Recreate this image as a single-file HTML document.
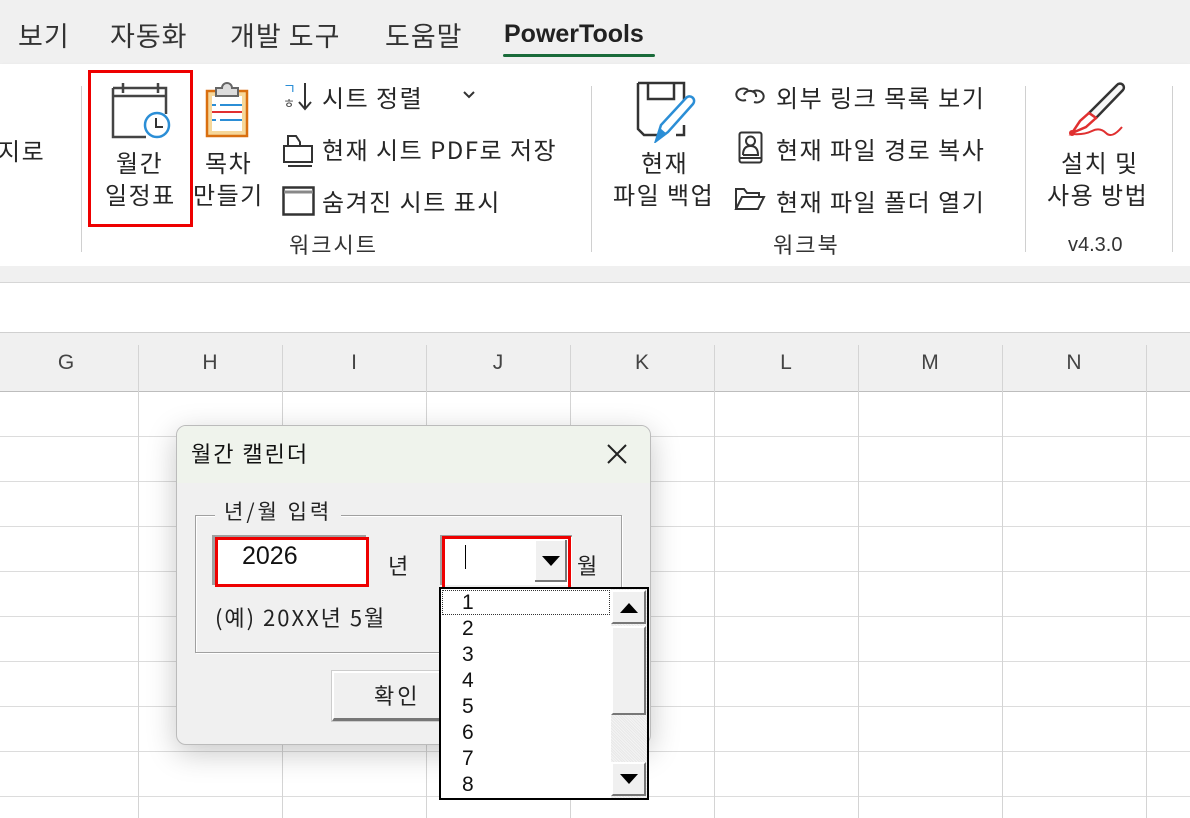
<!DOCTYPE html>
<html><head><meta charset="utf-8">
<style>
*{margin:0;padding:0;box-sizing:border-box}
body{width:1190px;height:818px;overflow:hidden;background:#fff;position:relative;font-family:"Liberation Sans","Noto Sans CJK KR",sans-serif;color:#222;line-height:1}
.a{position:absolute;white-space:nowrap;line-height:1}
.k{font-family:"Noto Sans CJK KR","Liberation Sans",sans-serif}
.t{font-size:27px;top:21px;color:#333;letter-spacing:1px}
.r{font-size:24px;color:#262626;letter-spacing:1.5px}
.vl{position:absolute;width:1px;background:#d4d4d4}
.hl{position:absolute;height:1px;background:#dcdcdc;left:0;width:1190px}
.col{position:absolute;top:352px;font-size:21px;color:#444;width:20px;text-align:center}
</style></head><body>
<!-- tabs -->
<div class="a" style="left:0;top:0;width:1190px;height:64px;background:#f0f0f0"></div>
<div class="a k t" style="left:18px">보기</div>
<div class="a k t" style="left:110px">자동화</div>
<div class="a k t" style="left:230px">개발 도구</div>
<div class="a k t" style="left:385px">도움말</div>
<div class="a" style="left:504px;top:22px;font-size:25px;font-weight:bold;color:#222">PowerTools</div>
<div class="a" style="left:503px;top:54px;width:152px;height:3px;background:#1a6b3a;border-radius:2px"></div>
<!-- ribbon -->
<div class="a" style="left:0;top:64px;width:1190px;height:202px;background:#fff;box-shadow:0 2px 4px rgba(0,0,0,.12)"></div>
<div class="a" style="left:0;top:266px;width:1190px;height:16px;background:#f0f0f0"></div>
<div class="vl" style="left:81px;top:86px;height:166px;background:#d0d0d0"></div>
<div class="vl" style="left:591px;top:86px;height:166px;background:#d0d0d0"></div>
<div class="vl" style="left:1025px;top:86px;height:166px;background:#d0d0d0"></div>
<div class="vl" style="left:1172px;top:86px;height:166px;background:#d0d0d0"></div>
<div class="a k r" style="left:-2px;top:138px">지로</div>
<!-- calendar btn -->
<div class="a" style="left:88px;top:70px;width:105px;height:157px;border:3px solid #e00"></div>
<svg class="a" style="left:110px;top:82px" width="62" height="62" viewBox="0 0 62 62">
<path d="M3 6H56V32M3 6V55H36M3 14H56M13 1V11M48 1V11" fill="none" stroke="#444" stroke-width="2.5"/>
<circle cx="47" cy="43" r="12" fill="#fff" stroke="#2b8ed6" stroke-width="2.5"/>
<path d="M46 36V45H53" fill="none" stroke="#333" stroke-width="2"/></svg>
<div class="a k r" style="left:116px;top:150px">월간</div>
<div class="a k r" style="left:105px;top:182px">일정표</div>
<!-- TOC -->
<svg class="a" style="left:205px;top:82px" width="46" height="58" viewBox="0 0 46 58">
<rect x="2" y="9" width="40" height="45" fill="#f6d79a" stroke="#d96f10" stroke-width="2.5"/>
<rect x="7" y="14" width="30" height="35" fill="#fff"/>
<path d="M11 14V6H17A5 5 0 0 1 27 6H33V14Z" fill="#ddd" stroke="#666" stroke-width="2"/>
<path d="M7 23H11M15 23H37M7 38H11M15 38H37" stroke="#2b8ed6" stroke-width="2"/>
<path d="M7 30H37" stroke="#e03030" stroke-width="2"/></svg>
<div class="a k r" style="left:205px;top:150px">목차</div>
<div class="a k r" style="left:193px;top:182px">만들기</div>
<!-- small buttons worksheet -->
<div class="a" style="left:283px;top:82px;font-size:14px;color:#2b8ed6;line-height:14px">ㄱ</div>
<div class="a" style="left:283px;top:97px;font-size:13px;color:#444">ㅎ</div>
<svg class="a" style="left:297px;top:82px" width="16" height="30"><path d="M8 1V27M2 20L8 27L14 20" fill="none" stroke="#333" stroke-width="2"/></svg>
<div class="a k r" style="left:322px;top:85px">시트 정렬</div>
<svg class="a" style="left:463px;top:91px" width="12" height="8"><path d="M1 1L6 6L11 1" fill="none" stroke="#333" stroke-width="2"/></svg>
<svg class="a" style="left:282px;top:132px" width="34" height="36"><path d="M2 14H30V30H2Z M6 34H30 M6 14V4H14L18 10V14" fill="none" stroke="#333" stroke-width="2"/></svg>
<div class="a k r" style="left:322px;top:137px">현재 시트 PDF로 저장</div>
<svg class="a" style="left:282px;top:186px" width="34" height="30"><rect x="1.5" y="1.5" width="30" height="27" fill="none" stroke="#333" stroke-width="2.5"/><path d="M2 6H31" stroke="#888" stroke-width="3"/></svg>
<div class="a k r" style="left:322px;top:189px">숨겨진 시트 표시</div>
<div class="a k" style="left:289px;top:233px;font-size:22px;color:#333;letter-spacing:2px">워크시트</div>
<!-- workbook -->
<svg class="a" style="left:636px;top:81px" width="62" height="62" viewBox="0 0 62 62">
<path d="M2 2H48V22M2 2V48L8 54H28M48 44V54H40M12 2V18H38V2" fill="none" stroke="#333" stroke-width="2.5"/>
<path d="M20 60L25 44L50 17A4 4 0 0 1 57 23L32 51Z" fill="#fff" stroke="#2b8ed6" stroke-width="2.5"/>
<path d="M20 60L24 47L31 53Z" fill="#2b8ed6"/></svg>
<div class="a k r" style="left:641px;top:150px">현재</div>
<div class="a k r" style="left:613px;top:182px">파일 백업</div>
<svg class="a" style="left:734px;top:86px" width="32" height="20"><path d="M14 4A7 6 0 1 0 12 14 M18 6A7 6 0 1 1 20 16" fill="none" stroke="#333" stroke-width="2"/><path d="M10 9A6 5 0 0 1 22 11" fill="none" stroke="#333" stroke-width="2"/></svg>
<div class="a k r" style="left:776px;top:85px">외부 링크 목록 보기</div>
<svg class="a" style="left:738px;top:131px" width="25" height="33"><rect x="1.5" y="1.5" width="22" height="30" rx="2" fill="none" stroke="#333" stroke-width="2"/><circle cx="12.5" cy="10" r="4.5" fill="none" stroke="#333" stroke-width="2"/><path d="M5 24Q5 15 12.5 15Q20 15 20 24H5M2 27H23" fill="none" stroke="#333" stroke-width="2"/></svg>
<div class="a k r" style="left:776px;top:137px">현재 파일 경로 복사</div>
<svg class="a" style="left:734px;top:187px" width="32" height="24"><path d="M2 22V2H10L13 6H25V9 M2 22L8 10H30L24 22Z" fill="none" stroke="#333" stroke-width="2"/></svg>
<div class="a k r" style="left:776px;top:189px">현재 파일 폴더 열기</div>
<div class="a k" style="left:773px;top:233px;font-size:22px;color:#333;letter-spacing:2px">워크북</div>
<!-- install -->
<svg class="a" style="left:1066px;top:81px" width="64" height="62" viewBox="0 0 64 62">
<path d="M23 32L51 4A3 3 0 0 1 57 9L30 37Z" fill="#f6f6f6" stroke="#333" stroke-width="2.5"/>
<path d="M23 32L30 37L20 46L6 52L14 40Z" fill="#fff" stroke="#e03030" stroke-width="2.5"/>
<circle cx="6" cy="52" r="3" fill="#e03030"/>
<path d="M6 53Q18 54 26 50T40 52T56 46" fill="none" stroke="#e03030" stroke-width="2"/></svg>
<div class="a k r" style="left:1061px;top:150px">설치 및</div>
<div class="a k r" style="left:1047px;top:182px">사용 방법</div>
<div class="a" style="left:1068px;top:235px;font-size:20px;color:#333">v4.3.0</div>
<!-- sheet -->
<div class="hl" style="top:282px;background:#d6d6d6"></div>
<div class="a" style="left:0;top:333px;width:1190px;height:58px;background:#f0f0f0"></div>
<div class="hl" style="top:332px;background:#d0d0d0"></div>
<div class="hl" style="top:391px;background:#bdbdbd"></div>
<div class="hl" style="top:436px"></div><div class="hl" style="top:481px"></div><div class="hl" style="top:526px"></div><div class="hl" style="top:571px"></div><div class="hl" style="top:616px"></div><div class="hl" style="top:661px"></div><div class="hl" style="top:706px"></div><div class="hl" style="top:751px"></div><div class="hl" style="top:796px"></div>
<div class="vl" style="left:138px;top:345px;height:473px"></div>
<div class="vl" style="left:282px;top:345px;height:473px"></div>
<div class="vl" style="left:426px;top:345px;height:473px"></div>
<div class="vl" style="left:570px;top:345px;height:473px"></div>
<div class="vl" style="left:714px;top:345px;height:473px"></div>
<div class="vl" style="left:858px;top:345px;height:473px"></div>
<div class="vl" style="left:1002px;top:345px;height:473px"></div>
<div class="vl" style="left:1146px;top:345px;height:473px"></div>
<div class="col" style="left:56px">G</div><div class="col" style="left:200px">H</div><div class="col" style="left:344px">I</div><div class="col" style="left:488px">J</div><div class="col" style="left:632px">K</div><div class="col" style="left:776px">L</div><div class="col" style="left:920px">M</div><div class="col" style="left:1064px">N</div>
<!-- dialog -->
<div class="a" style="left:176px;top:425px;width:475px;height:320px;background:#f0f0f0;border:1px solid #bbb;border-radius:10px;box-shadow:0 8px 30px rgba(0,0,0,.22);overflow:hidden">
<div style="height:57px;background:#eff3ec"></div></div>
<div class="a k" style="left:191px;top:442px;font-size:22px;color:#111;letter-spacing:2px">월간 캘린더</div>
<svg class="a" style="left:606px;top:443px" width="22" height="22"><path d="M2 2L20 20M20 2L2 20" stroke="#222" stroke-width="2"/></svg>
<div class="a" style="left:195px;top:515px;width:427px;height:138px;border:1px solid #a0a0a0;box-shadow:1px 1px 0 #fff inset,1px 1px 0 #fff"></div>
<div class="a k" style="left:215px;top:501px;padding:0 9px;background:#f0f0f0;font-size:21px;color:#222;letter-spacing:3px">년/월 입력</div>
<div class="a" style="left:215px;top:537px;width:154px;height:50px;background:#fff;border:3px solid #e00;box-shadow:-3px -2px 0 #a0a0a0"></div>
<div class="a" style="left:242px;top:544px;font-size:25px;color:#111">2026</div>
<div class="a k" style="left:388px;top:554px;font-size:22px">년</div>
<div class="a" style="left:440px;top:535px;width:132px;height:50px;background:#fff;border-left:2px solid #a0a0a0;border-top:2px solid #a0a0a0"></div>
<div class="a" style="left:535px;top:540px;width:32px;height:42px;background:#f0f0f0;border-right:2px solid #777;border-bottom:2px solid #777;box-shadow:1px 1px 0 #fff inset"></div>
<svg class="a" style="left:542px;top:556px" width="18" height="10"><path d="M0 0H18L9 10Z" fill="#000"/></svg>
<div class="a" style="left:465px;top:545px;width:1px;height:24px;background:#000"></div>
<div class="a" style="left:442px;top:536px;width:129px;height:55px;border:3px solid #e00"></div>
<div class="a k" style="left:577px;top:554px;font-size:22px">월</div>
<div class="a k" style="left:215px;top:606px;font-size:22px;color:#222;letter-spacing:2px">(예) 20XX년 5월</div>
<div class="a" style="left:332px;top:671px;width:120px;height:50px;background:#f0f0f0;border-top:2px solid #fff;border-left:2px solid #fff;border-right:2px solid #777;border-bottom:3px solid #777;box-shadow:0 0 0 1px #ccc"></div>
<div class="a k" style="left:374px;top:684px;font-size:22px;letter-spacing:3px">확인</div>
<!-- listbox -->
<div class="a" style="left:439px;top:587px;width:210px;height:213px;background:#fff;border:2px solid #000"></div>
<div class="a" style="left:442px;top:590px;width:168px;height:25px;border:1px dotted #333"></div>
<div class="a" style="left:462px;top:590px;font-size:21px;line-height:26px;color:#111;white-space:pre">1
2
3
4
5
6
7
8</div>
<div class="a" style="left:611px;top:589px;width:36px;height:209px;background:repeating-linear-gradient(45deg,#f4f4f4 0 1px,#e8e8e8 1px 2px)"></div>
<div class="a" style="left:611px;top:590px;width:35px;height:34px;background:#f0f0f0;border-top:2px solid #fff;border-left:2px solid #fff;border-right:2px solid #777;border-bottom:2px solid #777"></div>
<svg class="a" style="left:620px;top:603px" width="18" height="10"><path d="M0 10H18L9 0Z" fill="#000"/></svg>
<div class="a" style="left:611px;top:626px;width:35px;height:89px;background:#f0f0f0;border-top:2px solid #fff;border-left:2px solid #fff;border-right:2px solid #777;border-bottom:2px solid #777"></div>
<div class="a" style="left:611px;top:762px;width:35px;height:34px;background:#f0f0f0;border-top:2px solid #fff;border-left:2px solid #fff;border-right:2px solid #777;border-bottom:2px solid #777"></div>
<svg class="a" style="left:620px;top:774px" width="18" height="10"><path d="M0 0H18L9 10Z" fill="#000"/></svg>
</body></html>
